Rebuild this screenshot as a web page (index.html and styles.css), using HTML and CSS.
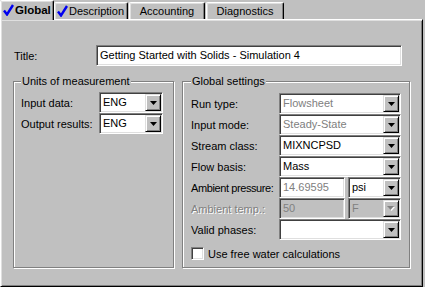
FILE: index.html
```html
<!DOCTYPE html>
<html>
<head>
<meta charset="utf-8">
<link rel="stylesheet" href="styles.css">
</head>
<body>
<div class="tabs">
  <div class="tab sel"><svg class="chk" width="11" height="12" viewBox="0 0 11 12"><polyline points="1,6.5 4,10.5 10,1" fill="none" stroke="#0000f0" stroke-width="2.4"/></svg><b>Global</b></div>
  <div class="tab desc"><svg class="chk" width="11" height="12" viewBox="0 0 11 12"><polyline points="1,6.5 4,10.5 10,1" fill="none" stroke="#0000f0" stroke-width="2.4"/></svg>Description</div>
  <div class="tab acc">Accounting</div>
  <div class="tab diag">Diagnostics</div>
</div>
<div class="panel">
  <div class="title-row">
    <span class="title-label">Title:</span>
    <div class="field wide"><span class="val">Getting Started with Solids - Simulation 4</span></div>
  </div>
  <div class="groups">
    <div class="group units">
      <span class="legend">Units of measurement</span>
      <div class="grid units-grid">
        <span class="lbl">Input data:</span>
        <div class="combo"><span class="val">ENG</span><span class="btn"><svg width="7" height="4" viewBox="0 0 7 4"><polygon points="0,0 7,0 3.5,4" fill="#000"/></svg></span></div>
        <span class="lbl">Output results:</span>
        <div class="combo"><span class="val">ENG</span><span class="btn"><svg width="7" height="4" viewBox="0 0 7 4"><polygon points="0,0 7,0 3.5,4" fill="#000"/></svg></span></div>
      </div>
    </div>
    <div class="group global">
      <span class="legend">Global settings</span>
      <div class="grid global-grid">
        <span class="lbl">Run type:</span>
        <div class="combo ro"><span class="val">Flowsheet</span><span class="btn"><svg width="7" height="4" viewBox="0 0 7 4"><polygon points="0,0 7,0 3.5,4" fill="#000"/></svg></span></div>
        <span class="lbl">Input mode:</span>
        <div class="combo ro"><span class="val">Steady-State</span><span class="btn"><svg width="7" height="4" viewBox="0 0 7 4"><polygon points="0,0 7,0 3.5,4" fill="#000"/></svg></span></div>
        <span class="lbl">Stream class:</span>
        <div class="combo"><span class="val">MIXNCPSD</span><span class="btn"><svg width="7" height="4" viewBox="0 0 7 4"><polygon points="0,0 7,0 3.5,4" fill="#000"/></svg></span></div>
        <span class="lbl">Flow basis:</span>
        <div class="combo"><span class="val">Mass</span><span class="btn"><svg width="7" height="4" viewBox="0 0 7 4"><polygon points="0,0 7,0 3.5,4" fill="#000"/></svg></span></div>
        <span class="lbl tight">Ambient pressure:</span>
        <div class="pair">
          <div class="field ro num"><span class="val">14.69595</span></div>
          <div class="combo unit"><span class="val">psi</span><span class="btn"><svg width="7" height="4" viewBox="0 0 7 4"><polygon points="0,0 7,0 3.5,4" fill="#000"/></svg></span></div>
        </div>
        <span class="lbl dis-lbl">Ambient temp.:</span>
        <div class="pair">
          <div class="field dis num"><span class="val">50</span></div>
          <div class="combo dis unit"><span class="val">F</span><span class="btn"><svg width="8" height="5" viewBox="0 0 8 5"><polygon points="1,1 8,1 4.5,5" fill="#fff"/><polygon points="0,0 7,0 3.5,4" fill="#808080"/></svg></span></div>
        </div>
        <span class="lbl">Valid phases:</span>
        <div class="combo"><span class="val"></span><span class="btn"><svg width="7" height="4" viewBox="0 0 7 4"><polygon points="0,0 7,0 3.5,4" fill="#000"/></svg></span></div>
        <div class="check-row"><span class="checkbox"></span><span>Use free water calculations</span></div>
      </div>
    </div>
  </div>
</div>
</body>
</html>
```

FILE: styles.css
```css
html, body {
  margin: 0;
  padding: 0;
  background: #c0c0c0;
}
body {
  width: 425px;
  height: 287px;
  overflow: hidden;
  font-family: "Liberation Sans", Arial, sans-serif;
  font-size: 11px;
  color: #000;
}

/* Tabs */
.tabs {
  display: flex;
  align-items: flex-end;
  height: 19px;
}
.tab {
  box-sizing: border-box;
  height: 17px;
  display: flex;
  align-items: center;
  justify-content: center;
  border-top: 1px solid #fff;
  border-left: 1px solid #fff;
  border-right: 1px solid #000;
  box-shadow: inset -1px 0 #808080, inset 1px 1px #dfdfdf;
  border-radius: 2px 2px 0 0;
  background: #c0c0c0;
  white-space: nowrap;
}
.tab.sel {
  width: 54px;
  height: 20px;
  margin-bottom: -1px;
  position: relative;
  z-index: 1;
  justify-content: flex-start;
  padding: 0 0 2px 2px;
}
.tab.sel b { margin-left: 1px; font-size: 11.5px; }
.tab.desc {
  width: 74px;
  justify-content: flex-start;
  padding-left: 2px;
}
.tab.acc { width: 76px; margin-left: 1px; }
.tab.diag { width: 78px; margin-left: 1px; }
.chk { display: block; flex: none; }
.tab.desc .chk { margin-right: 1px; }

/* Panel */
.panel {
  box-sizing: border-box;
  width: 423px;
  height: 268px;
  border: 1px solid;
  border-color: #fff #000 #000 #fff;
  box-shadow: inset 1px 1px #dfdfdf, inset -1px -1px #808080;
  padding: 25px 0 0 12px;
}

.title-row {
  display: flex;
  align-items: center;
  height: 21px;
}
.title-label {
  width: 82px;
  padding-left: 1px;
}
.field, .combo {
  box-sizing: border-box;
  height: 21px;
  display: flex;
  align-items: center;
  background: #fff;
  border: 1px solid;
  border-color: #808080 #fff #fff #808080;
  box-shadow: inset 1px 1px #404040, inset -1px -1px #dfdfdf;
  padding: 1px;
}
.field.wide { width: 306px; }
.val {
  flex: 1;
  padding-left: 2px;
  line-height: 17px;
  white-space: nowrap;
  overflow: hidden;
}
.btn {
  box-sizing: border-box;
  width: 16px;
  height: 17px;
  flex: none;
  display: flex;
  align-items: center;
  justify-content: center;
  background: #c0c0c0;
  border: 1px solid;
  border-color: #dfdfdf #000 #000 #dfdfdf;
  box-shadow: inset 1px 1px #fff, inset -1px -1px #808080;
}
.btn svg { display: block; }
.ro .val { color: #808080; }
.dis { background: #c0c0c0; }
.dis .val { color: #808080; }

/* Groups */
.groups {
  display: grid;
  grid-template-columns: 161px 228px;
  column-gap: 8px;
  margin-top: 15px;
}
.group {
  position: relative;
  box-sizing: border-box;
  height: 187px;
  border: 1px solid #808080;
  box-shadow: inset 1px 1px #fff, 1px 1px #fff;
}
.legend {
  position: absolute;
  top: -7px;
  left: 7px;
  padding: 0 1px;
  line-height: 13px;
  background: #c0c0c0;
}
.global .legend { left: 8px; }
.units { padding: 10px 0 0 7px; }
.global { padding: 11px 0 0 8px; }

.grid {
  display: grid;
  grid-auto-rows: 21px;
  align-items: center;
}
.units-grid { grid-template-columns: 78px 64px; }
.global-grid { grid-template-columns: 88px 122px; }
.lbl { white-space: nowrap; }
.lbl.tight { letter-spacing: -0.4px; }
.dis-lbl {
  color: #808080;
  text-shadow: 1px 1px 0 #fff;
}
.pair {
  display: flex;
  gap: 3px;
}
.field.num { width: 66px; }
.combo.unit { width: 53px; }

.check-row {
  grid-column: 1 / span 2;
  display: flex;
  align-items: center;
  gap: 4px;
  margin-top: 7px;
  height: 13px;
  align-self: start;
}
.checkbox {
  box-sizing: border-box;
  width: 13px;
  height: 13px;
  background: #fff;
  border: 1px solid;
  border-color: #808080 #fff #fff #808080;
  box-shadow: inset 1px 1px #404040, inset -1px -1px #dfdfdf;
}
```
